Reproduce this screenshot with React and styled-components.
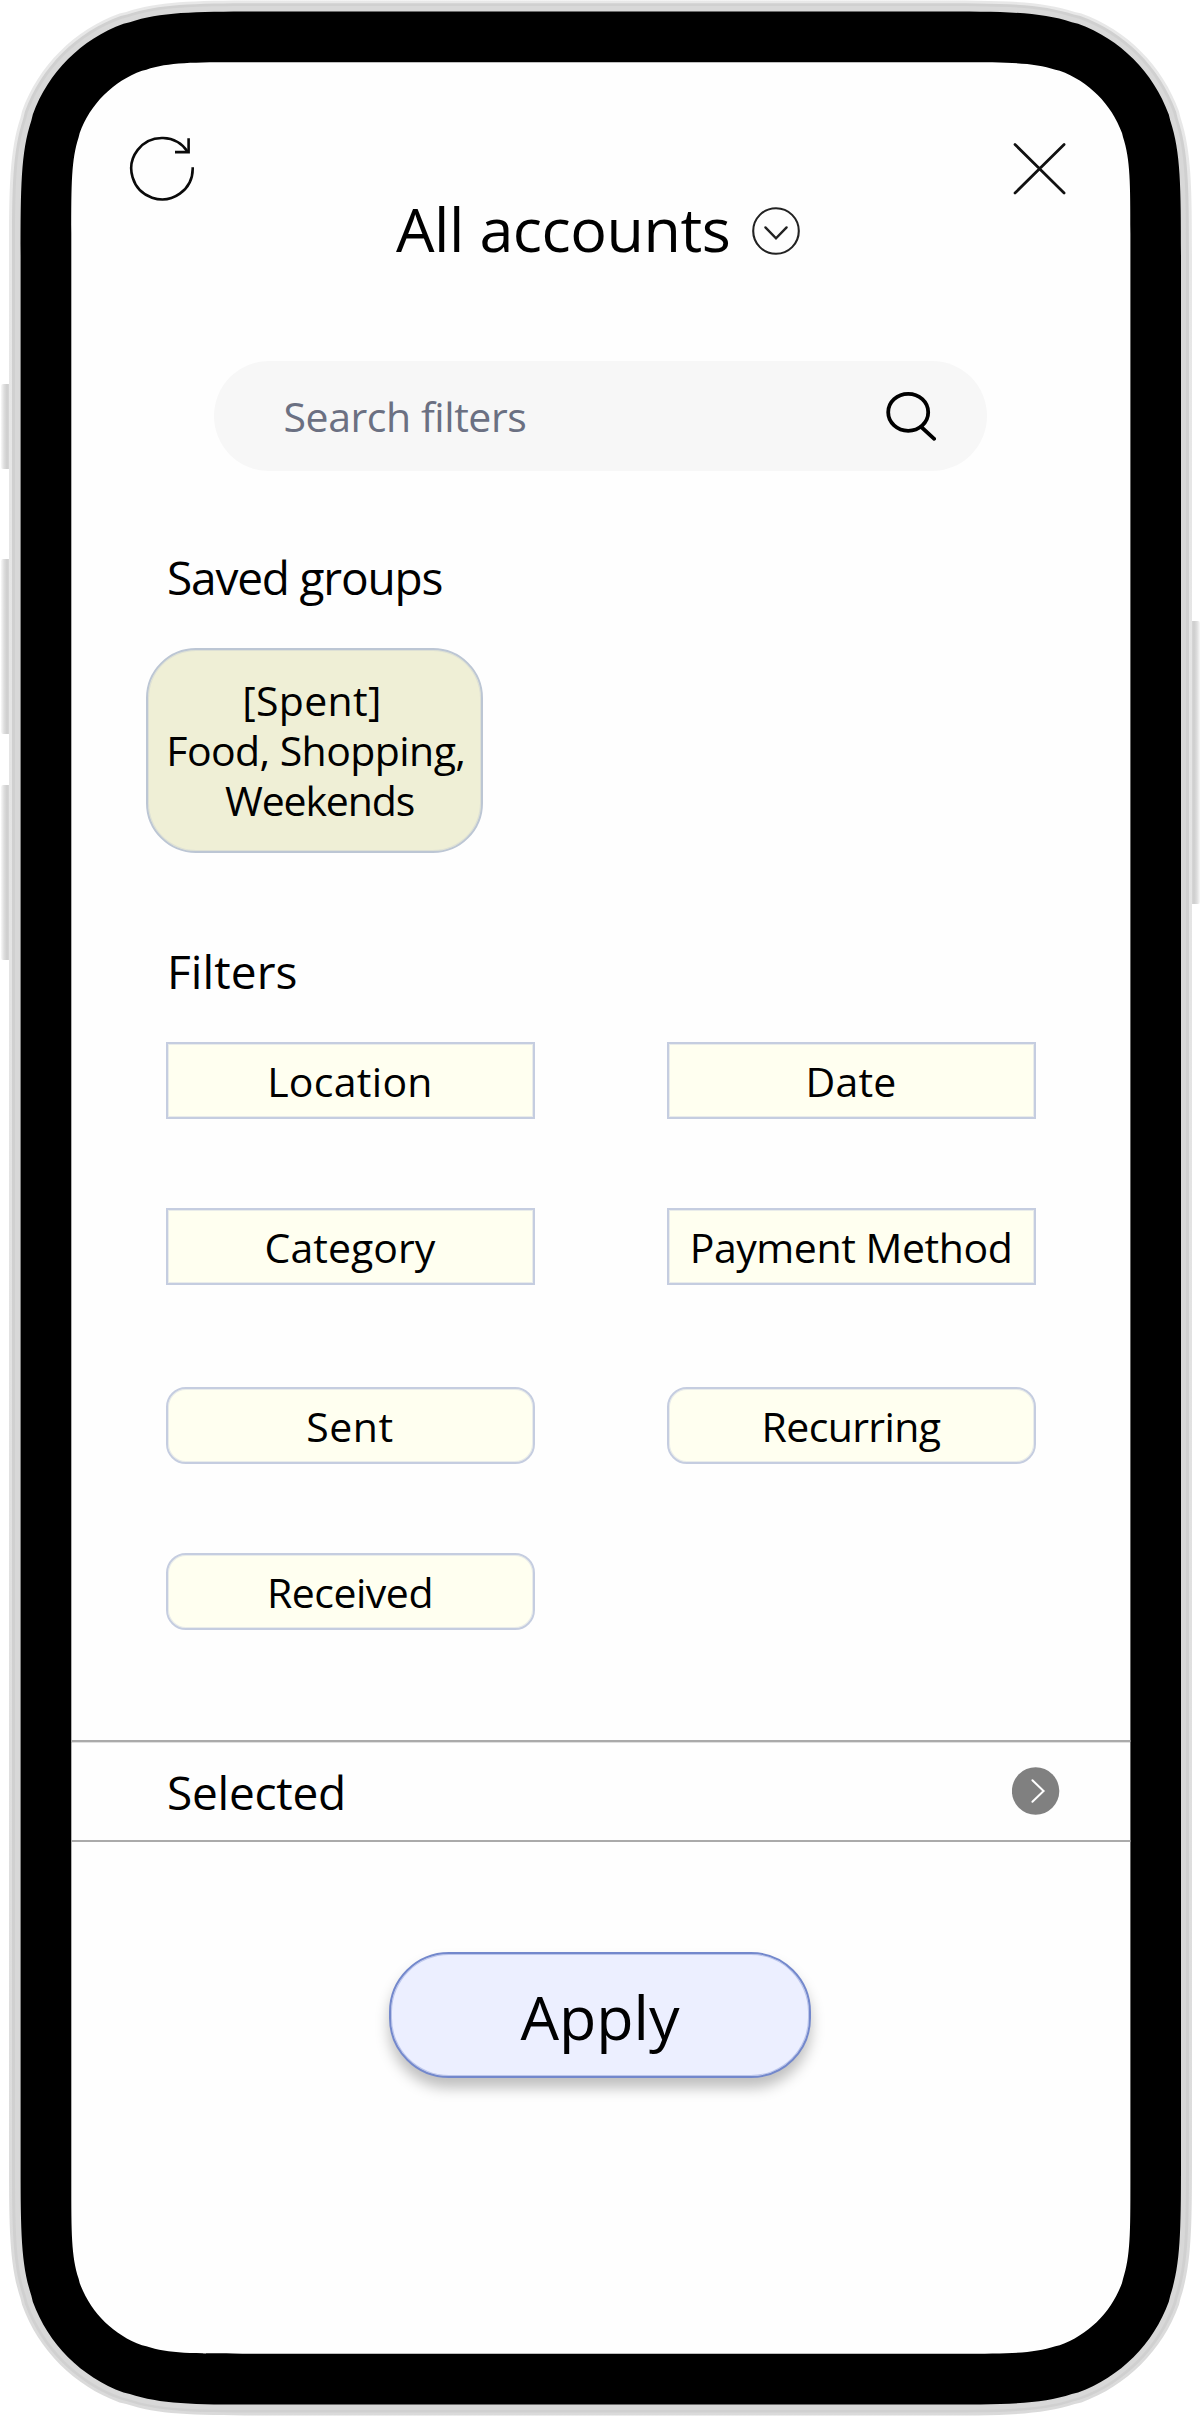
import React from "react";
import styled, { createGlobalStyle } from "styled-components";

const GlobalStyle = createGlobalStyle`
  *, *::before, *::after { box-sizing: border-box; }
  body { margin: 0; background: #fff; }
`;

/* Continuous-curvature rounded rectangle used by every layer of the device body. */
function smoothRect(x0, y0, x1, y1, r) {
  const corner = [
    [1.08849, 0], [0.86841, 0], [0.66993, 0.0655],
    [0.63149, 0.07491],
    [0.37282, 0.16906], [0.16906, 0.37282], [0.07491, 0.63149],
    [0.0655, 0.66993],
    [0, 0.86841], [0, 1.08849], [0, 1.52866],
  ];
  const f = (n) => n.toFixed(2);
  const draw = (pts, start, map) => {
    const p = pts.map(([a, b]) => map(a * r, b * r)).map(([a, b]) => `${f(a)} ${f(b)}`);
    const s = map(start[0] * r, start[1] * r);
    return `L${f(s[0])} ${f(s[1])}C${p[0]} ${p[1]} ${p[2]}L${p[3]}C${p[4]} ${p[5]} ${p[6]}L${p[7]}C${p[8]} ${p[9]} ${p[10]}`;
  };
  const swapped = corner.map(([a, b]) => [b, a]);
  const h = [1.52866, 0];
  const v = [0, 1.52866];
  const d =
    draw(corner, h, (a, b) => [x1 - a, y0 + b]) +
    draw(swapped, v, (a, b) => [x1 - a, y1 - b]) +
    draw(corner, h, (a, b) => [x0 + a, y1 - b]) +
    draw(swapped, v, (a, b) => [x0 + a, y0 + b]);
  return `path("M${d.slice(1)}Z")`;
}

const Phone = styled.div`
  position: relative;
  width: 1201px;
  height: 2416px;
  padding: 0 9px;
  font-family: "Open Sans", "Noto Sans", sans-serif;
  color: #000;
`;

const SideButton = styled.div`
  position: absolute;
  top: ${(p) => p.$top}px;
  height: ${(p) => p.$height}px;
  width: 11px;
  ${(p) => (p.$side === "left" ? "left: 1px;" : "right: 1px;")}
  border-radius: 2px;
  background: linear-gradient(
    to ${(p) => (p.$side === "left" ? "right" : "left")},
    #f8f8f8 0, #dedede 3px, #cecece 6px, #d6d6d6 8px
  );
`;

const Rim = styled.div`
  position: relative;
  width: 1183px;
  height: 2416px;
  padding: 3px;
  background: linear-gradient(#e8e8e8, #e3e3e3 50%, #dadada);
  clip-path: ${smoothRect(0, 0.5, 1183, 2415.5, 175)};
`;

const Shell = styled.div`
  width: 1177px;
  height: 2410px;
  padding: 3px;
  background: #d0d0d0;
  clip-path: ${smoothRect(0, 0.2, 1177, 2409.5, 172)};
`;

const ShellEdge = styled.div`
  width: 1171px;
  height: 2404px;
  padding: 5px;
  background: #d8d8d8;
  clip-path: ${smoothRect(0, 0, 1171, 2404, 169)};
`;

const Bezel = styled.div`
  width: 1161px;
  height: 2394px;
  padding: 51px 50px 51px 51px;
  background: #000;
  clip-path: ${smoothRect(0.6, 0.5, 1161, 2393.6, 163)};
`;

const Screen = styled.main`
  display: flex;
  flex-direction: column;
  width: 1060px;
  height: 2292px;
  background: #fefefe;
  clip-path: ${smoothRect(0.3, 0.3, 1059.4, 2291.7, 112)};
`;

const TopBar = styled.div`
  display: flex;
  align-items: center;
  justify-content: space-between;
  height: 70px;
  margin-top: 72px;
  padding: 0 62px 0 57px;
`;

const TitleRow = styled.div`
  display: grid;
  grid-template-columns: 356px 48px;
  align-items: center;
  height: 84px;
  margin: -17px 0 0 325px;
  svg { margin-top: 4px; }
`;

const Title = styled.h1`
  margin: 0;
  font-size: 61px;
  font-weight: 400;
  line-height: 84px;
  letter-spacing: -0.46px;
  white-space: nowrap;
`;

const SearchBar = styled.div`
  display: flex;
  align-items: center;
  justify-content: space-between;
  width: 773px;
  height: 110px;
  margin: 90px 0 0 143px;
  padding: 0 51px 0 69.5px;
  border-radius: 55px;
  background: #f7f7f7;
`;

const Placeholder = styled.span`
  font-size: 41px;
  letter-spacing: -0.43px;
  color: #6b7082;
`;

const SectionHeading = styled.h2`
  margin: ${(p) => p.$gap}px 0 0 96px;
  font-size: 46px;
  font-weight: 400;
  line-height: 60px;
  letter-spacing: ${(p) => p.$tracking}px;
`;

const GroupCard = styled.div`
  width: 337px;
  height: 205px;
  margin: 41px 0 0 75px;
  padding-top: 24.5px;
  border: 2px solid #bcc6d4;
  border-radius: 50px;
  box-shadow: inset 0 0 0 1px rgba(188, 198, 212, 0.35);
  background: #efefd6;
`;

const GroupLine = styled.div`
  padding-left: ${(p) => p.$indent}px;
  font-size: 41px;
  line-height: 50px;
  letter-spacing: ${(p) => p.$tracking}px;
  white-space: nowrap;
`;

const FilterGrid = styled.div`
  display: grid;
  grid-template-columns: 369px 369px;
  grid-auto-rows: 77px;
  gap: 89px 132px;
  margin: ${(p) => p.$gap}px 0 0 95px;
`;

const FilterButton = styled.button`
  display: flex;
  align-items: center;
  justify-content: center;
  padding: 0 1px 0 0;
  border: 2px solid #c5cde0;
  border-radius: ${(p) => (p.$rounded ? 20 : 0)}px;
  box-shadow: inset 0 0 0 1px rgba(200, 208, 226, 0.4);
  background: #fffff0;
  color: #000;
  font: 41px "Open Sans", "Noto Sans", sans-serif;
  letter-spacing: ${(p) => p.$tracking}px;
  white-space: nowrap;
`;

const SelectedBar = styled.div`
  display: flex;
  align-items: center;
  justify-content: space-between;
  height: 102px;
  margin-top: 110px;
  padding: 0 71px 0 96px;
  border: solid #aaa;
  border-width: 2px 0;
  box-shadow: inset 0 1px 0 rgba(0, 0, 0, 0.12);
`;

const SelectedLabel = styled.span`
  padding-top: 2px;
  font-size: 46px;
  line-height: 60px;
  letter-spacing: -0.25px;
`;

const ApplyButton = styled.button`
  width: 422px;
  height: 126px;
  margin: 110px 0 0 318px;
  padding: 2px 0 0;
  border: 2px solid #7388cc;
  border-radius: 60px;
  box-shadow: inset 0 0 0 1px rgba(115, 136, 204, 0.4), 0 10px 14px rgba(0, 0, 0, 0.25);
  background: #ecefff;
  color: #000;
  font: 61px "Open Sans", "Noto Sans", sans-serif;
`;

const RefreshIcon = () => (
  <svg width="70" height="70" viewBox="128 134 70 70" fill="none" stroke="#0a0a0a" strokeWidth="2.6">
    <path d="M192.7 167.3V168.7A30.7 30.7 0 1 1 187.6 151.7" />
    <path d="M188.6 138.3V152.1H175" />
  </svg>
);

const CloseIcon = () => (
  <svg width="60" height="60" viewBox="1009 139 60 60" fill="none" stroke="#111" strokeWidth="2.7" strokeLinecap="round">
    <path d="M1015 144.5L1064.1 193M1064.1 144.5L1015 193" />
  </svg>
);

const ChevronDownCircle = () => (
  <svg width="48" height="48" viewBox="0 0 48 48" fill="none" stroke="#222" strokeWidth="2.1">
    <circle cx="24" cy="24" r="22.8" />
    <path d="M13.4 20.4L24 31.3L34.6 20.4" strokeWidth="2.4" strokeLinecap="round" />
  </svg>
);

const SearchIcon = () => (
  <svg width="52" height="52" viewBox="884 390 52 52" fill="none" stroke="#000" strokeWidth="3.8">
    <ellipse cx="908.2" cy="412.3" rx="20" ry="18.5" />
    <path d="M921.3 427L934.2 438.8" strokeLinecap="round" />
  </svg>
);

const ArrowCircle = () => (
  <svg width="48" height="48" viewBox="0 0 48 48" fill="none">
    <circle cx="23.6" cy="24" r="23.7" fill="#808080" />
    <path d="M20.4 13.2L31.6 24L20.4 34.8" stroke="#fff" strokeWidth="2" strokeLinecap="round" />
  </svg>
);

const sideButtons = [
  { side: "left", top: 384, height: 85 },
  { side: "left", top: 559, height: 175 },
  { side: "left", top: 785, height: 175 },
  { side: "right", top: 621, height: 283 },
];

const groupLines = [
  { text: "[Spent]", indent: 94.3, tracking: 0.32 },
  { text: "Food, Shopping,", indent: 18.3, tracking: -0.57 },
  { text: "Weekends", indent: 77, tracking: -1.15 },
];

const menuFilters = [
  { text: "Location", tracking: 0.3 },
  { text: "Date", tracking: 0.18 },
  { text: "Category", tracking: 0.05 },
  { text: "Payment Method", tracking: -0.44 },
];

const toggleFilters = [
  { text: "Sent", tracking: 0.6 },
  { text: "Recurring", tracking: -0.6 },
  { text: "Received", tracking: -0.49 },
];

export default function App() {
  return (
    <Phone>
      <GlobalStyle />
      {sideButtons.map((b) => (
        <SideButton key={b.side + b.top} $side={b.side} $top={b.top} $height={b.height} />
      ))}
      <Rim>
        <Shell>
          <ShellEdge>
            <Bezel>
              <Screen>
                <TopBar>
                  <RefreshIcon />
                  <CloseIcon />
                </TopBar>
                <TitleRow>
                  <Title>All accounts</Title>
                  <ChevronDownCircle />
                </TitleRow>
                <SearchBar>
                  <Placeholder>Search filters</Placeholder>
                  <SearchIcon />
                </SearchBar>
                <SectionHeading $gap={76} $tracking={-1.19}>Saved groups</SectionHeading>
                <GroupCard>
                  {groupLines.map((l) => (
                    <GroupLine key={l.text} $indent={l.indent} $tracking={l.tracking}>{l.text}</GroupLine>
                  ))}
                </GroupCard>
                <SectionHeading $gap={88} $tracking={0.1}>Filters</SectionHeading>
                <FilterGrid $gap={41}>
                  {menuFilters.map((f) => (
                    <FilterButton key={f.text} $tracking={f.tracking}>{f.text}</FilterButton>
                  ))}
                </FilterGrid>
                <FilterGrid $gap={102}>
                  {toggleFilters.map((f) => (
                    <FilterButton key={f.text} $rounded $tracking={f.tracking}>{f.text}</FilterButton>
                  ))}
                </FilterGrid>
                <SelectedBar>
                  <SelectedLabel>Selected</SelectedLabel>
                  <ArrowCircle />
                </SelectedBar>
                <ApplyButton>Apply</ApplyButton>
              </Screen>
            </Bezel>
          </ShellEdge>
        </Shell>
      </Rim>
    </Phone>
  );
}
